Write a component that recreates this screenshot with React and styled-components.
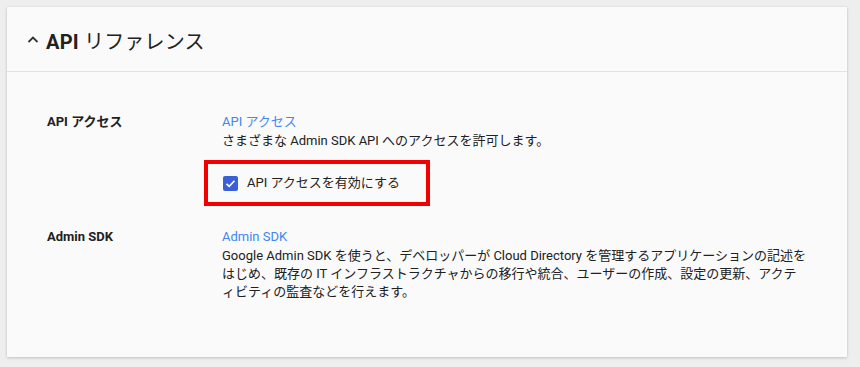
import React, { useState } from "react";
import styled, { createGlobalStyle } from "styled-components";

const GlobalStyle = createGlobalStyle`
  body {
    margin: 0;
    background: #eeeeee;
    font-family: Roboto, "Noto Sans CJK JP", sans-serif;
    color: #212121;
  }
`;

const Page = styled.div`
  padding: 7px 13px 10px 7px;
`;

const Card = styled.section`
  background: #fafafa;
  box-shadow: 0 1px 3px rgba(0, 0, 0, 0.18), 0 0 1px rgba(0, 0, 0, 0.1);
  height: 350px;
  box-sizing: border-box;
`;

const Header = styled.div`
  height: 65px;
  box-sizing: border-box;
  border-bottom: 1px solid #e2e2e2;
  display: flex;
  align-items: center;
  padding: 2px 0 0 20px;
  gap: 7px;
`;

const Title = styled.h2`
  margin: 0;
  font-size: 20px;
  font-weight: 400;
  color: #212121;
  letter-spacing: 0.2px;

  b {
    font-weight: 700;
  }
`;

const Body = styled.div`
  padding: 41px 40px 0 40px;
  display: flex;
  flex-direction: column;
  gap: 22px;
`;

const Row = styled.div`
  display: grid;
  grid-template-columns: 175px 1fr;
  font-size: 13px;
  line-height: 18px;
`;

const Label = styled.div`
  font-weight: 700;
  color: #212121;
`;

const Content = styled.div`
  display: flex;
  flex-direction: column;
  align-items: flex-start;
`;

const Link = styled.a`
  color: #4285f4;
  text-decoration: none;
  cursor: pointer;
  margin-bottom: 1px;
`;

const Desc = styled.div`
  color: #212121;
`;

const Highlight = styled.div`
  margin: 10px 0 0 -18px;
  width: 226px;
  height: 46px;
  box-sizing: border-box;
  border: 4px solid #f20000;
  display: flex;
  align-items: center;
  padding: 0 0 0 15px;
  gap: 9px;
`;

const Box = styled.span`
  width: 15px;
  height: 15px;
  border-radius: 2px;
  background: ${(p) => (p.checked ? "#3b5fd6" : "transparent")};
  border: ${(p) => (p.checked ? "none" : "2px solid #757575")};
  box-sizing: border-box;
  display: flex;
  align-items: center;
  justify-content: center;
  cursor: pointer;
`;

const CheckLabel = styled.label`
  font-size: 13px;
  color: #212121;
  cursor: pointer;
`;

const Chevron = () => (
  <svg width="12" height="12" viewBox="0 0 12 12">
    <path d="M1.5 8 L6 3.5 L10.5 8" fill="none" stroke="#333" strokeWidth="1.8" />
  </svg>
);

const App = () => {
  const [checked, setChecked] = useState(true);

  return (
    <>
      <GlobalStyle />
      <Page>
        <Card>
          <Header>
            <Chevron />
            <Title>
              <b>API</b> リファレンス
            </Title>
          </Header>
          <Body>
            <Row>
              <Label>API アクセス</Label>
              <Content>
                <Link>API アクセス</Link>
                <Desc>さまざまな Admin SDK API へのアクセスを許可します。</Desc>
                <Highlight>
                  <Box checked={checked} onClick={() => setChecked(!checked)}>
                    {checked && (
                      <svg width="11" height="11" viewBox="0 0 11 11">
                        <path d="M1.5 5.8 L4.2 8.3 L9.5 2.8" fill="none" stroke="#fff" strokeWidth="1.6" />
                      </svg>
                    )}
                  </Box>
                  <CheckLabel onClick={() => setChecked(!checked)}>API アクセスを有効にする</CheckLabel>
                </Highlight>
              </Content>
            </Row>
            <Row>
              <Label>Admin SDK</Label>
              <Content>
                <Link>Admin SDK</Link>
                <Desc>
                  Google Admin SDK を使うと、デベロッパーが Cloud Directory を管理するアプリケーションの記述を
                  <br />
                  はじめ、既存の IT インフラストラクチャからの移行や統合、ユーザーの作成、設定の更新、アクテ
                  <br />
                  ィビティの監査などを行えます。
                </Desc>
              </Content>
            </Row>
          </Body>
        </Card>
      </Page>
    </>
  );
};

export default App;
